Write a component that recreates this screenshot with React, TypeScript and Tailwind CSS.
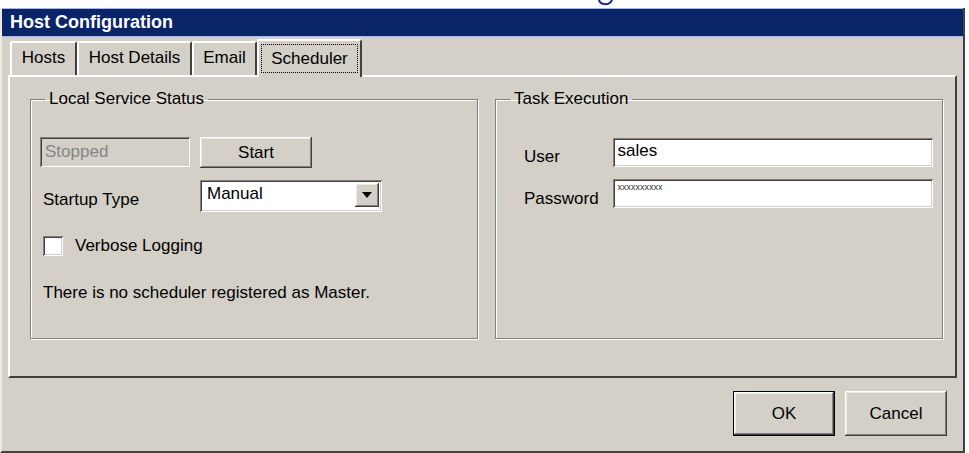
import React from "react";

const raised =
  "shadow-[inset_-1px_-1px_0_#404040,inset_1px_1px_0_#ffffff,inset_-2px_-2px_0_#808080,inset_2px_2px_0_#ece9e2]";
const sunken =
  "shadow-[inset_1px_1px_0_#808080,inset_-1px_-1px_0_#ffffff,inset_2px_2px_0_#404040,inset_-2px_-2px_0_#d4d0c8]";

function Tab({ label, active, w }: { label: string; active?: boolean; w: string }) {
  if (active) {
    return (
      <div className={`relative z-10 -mb-[2px] h-[38px] ${w} flex items-start px-[2px] pt-[3px] bg-[#d4d0c8] border-t-2 border-l-2 border-white border-r-2 border-r-[#404040] rounded-t-[2px]`}>
        <div className="flex-1 h-[29px] flex items-center justify-center border border-dotted border-black">
          {label}
        </div>
      </div>
    );
  }
  return (
    <div className={`h-[34px] ${w} flex items-center justify-center pb-[2px] bg-[#d4d0c8] border-t-2 border-l-2 border-white border-r-2 border-r-[#404040] rounded-t-[2px]`}>
      {label}
    </div>
  );
}

function Group({ title, children }: { title: string; children: React.ReactNode }) {
  return (
    <fieldset className="w-[448px] h-[250px] border border-[#808080] shadow-[inset_1px_1px_0_#ffffff,1px_1px_0_#ffffff] px-[9px] m-0 min-w-0">
      <legend className="ml-[5px] px-[4px] leading-[20px]">{title}</legend>
      {children}
    </fieldset>
  );
}

export default function App() {
  return (
    <div
      className="w-[969px] h-[453px] bg-white overflow-hidden text-[17px] text-black"
      style={{ fontFamily: '"Liberation Sans", Arial, sans-serif' }}
    >
      {/* top white strip with cut-off fragment */}
      <div className="h-[8px] overflow-hidden pl-[597px]">
        <svg width="18" height="8" viewBox="0 0 18 8">
          <path d="M2 0 C3 5 13 6 15 0" fill="none" stroke="#1f1f8a" strokeWidth="2" />
        </svg>
      </div>
      <div className="w-[965px] h-[445px] flex flex-col bg-[#d4d0c8] border-l-2 border-l-[#ece9e2] border-r-2 border-r-[#404040] border-b-2 border-b-[#404040]">
        {/* title bar */}
        <div className="h-[29px] bg-[#0a246a] flex items-center pl-[8px] text-white font-bold text-[18px] shadow-[inset_0_1px_0_#a6b8e6,inset_0_-1px_0_#a6b8e6]">
          Host Configuration
        </div>
        {/* tabs */}
        <div className="flex items-end h-[38px] pl-[8px] pt-[1px]">
          <Tab label="Hosts" w="w-[67px]" />
          <Tab label="Host Details" w="w-[115px]" />
          <Tab label="Email" w="w-[65px]" />
          <Tab label="Scheduler" w="w-[105px]" active />
        </div>
        {/* tab panel */}
        <div className="mx-[6px] h-[303px] border-t-2 border-l-2 border-white border-r-2 border-r-[#404040] border-b-2 border-b-[#404040] flex gap-[17px] pl-[20px] pt-[12px]">
          <Group title="Local Service Status">
            <div className="flex gap-[10px] mt-[28px]">
              <div className={`w-[150px] h-[30px] bg-[#d4d0c8] ${sunken} pl-[5px] flex items-center text-[#868686]`}>
                Stopped
              </div>
              <div className={`w-[112px] h-[31px] ${raised} flex items-center justify-center`}>Start</div>
            </div>
            <div className="flex items-start h-[32px] mt-[12px]">
              <div className="w-[160px] pl-[3px] pt-[10px] leading-[20px]">Startup Type</div>
              <div className={`w-[182px] h-[32px] bg-white ${sunken} flex items-start p-[3px]`}>
                <div className="flex-1 pl-[4px] pt-[1px] leading-[20px]">Manual</div>
                <div className={`w-[24px] h-[24px] bg-[#d4d0c8] ${raised} flex items-center justify-center`}>
                  <svg width="10" height="6" viewBox="0 0 10 6">
                    <path d="M0 0 H10 L5 6 Z" fill="#000" />
                  </svg>
                </div>
              </div>
            </div>
            <div className="flex items-center mt-[24px] pl-[3px]">
              <div className={`w-[20px] h-[20px] bg-white ${sunken}`} />
              <div className="ml-[12px] leading-[20px]">Verbose Logging</div>
            </div>
            <div className="pl-[3px] mt-[27px] leading-[20px]">There is no scheduler registered as Master.</div>
          </Group>
          <Group title="Task Execution">
            <div className="flex items-start h-[29px] mt-[29px]">
              <div className="w-[108px] pl-[19px] pt-[9px] leading-[20px]">User</div>
              <div className={`w-[322px] h-[29px] bg-white ${sunken} pl-[5px] pt-[3px] leading-[20px]`}>sales</div>
            </div>
            <div className="flex items-start h-[29px] mt-[12px]">
              <div className="w-[108px] pl-[19px] pt-[10px] leading-[20px]">Password</div>
              <div className={`w-[322px] h-[29px] bg-white ${sunken} pl-[5px] pt-[2px] text-[9px] leading-[12px] text-[#333]`}>
                xxxxxxxxxx
              </div>
            </div>
          </Group>
        </div>
        {/* bottom buttons */}
        <div className="flex-1 flex justify-end items-start gap-[10px] pr-[16px] pt-[13px]">
          <div className="w-[102px] h-[45px] border border-black">
            <div className={`w-full h-full ${raised} flex items-center justify-center`}>OK</div>
          </div>
          <div className={`w-[102px] h-[45px] ${raised} flex items-center justify-center`}>Cancel</div>
        </div>
      </div>
    </div>
  );
}
